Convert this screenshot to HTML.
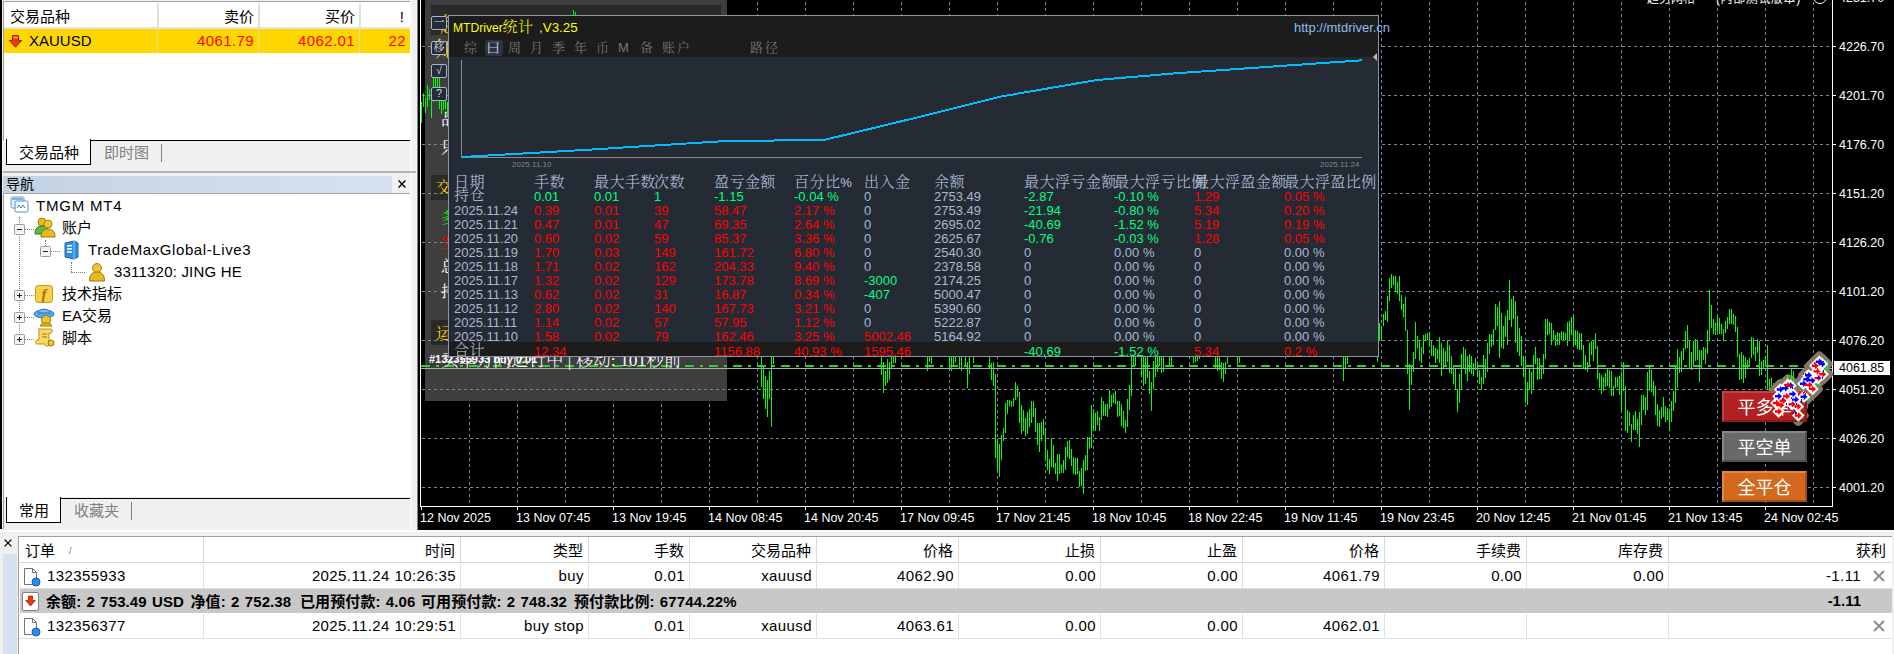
<!DOCTYPE html><html lang="zh-CN"><head><meta charset="utf-8"><title>MT4</title><style>
*{box-sizing:border-box;margin:0;padding:0}
html,body{width:1894px;height:654px;overflow:hidden;background:#f0f0f0}
body{position:relative;font-family:"Liberation Sans","Noto Sans CJK SC",sans-serif;font-size:15px;color:#000}
.a{position:absolute;white-space:nowrap}
.ui{font-size:15px;line-height:20px}
.r{text-align:right}
.chart{position:absolute;left:418px;top:0;width:1476px;height:530px;background:#000;overflow:hidden}
.cl{position:absolute;left:-418px;top:0;width:1894px;height:530px}
.ax{font-family:"Liberation Sans",sans-serif;font-size:12.5px;line-height:14px;color:#fff}
.pt{font-family:"Liberation Sans","Noto Serif CJK SC",serif;font-size:13px;line-height:14px}
.ph{font-family:"Liberation Sans","Noto Serif CJK SC",serif;font-size:15px;line-height:15px;color:#b8c8e0;font-weight:300;letter-spacing:.45px}
.red{color:#f00}.grn{color:#00ff7f}.lsb{color:#a9b9d3}
.tb{font-family:"Liberation Sans","Noto Serif CJK SC",serif;font-size:13px;line-height:14px;color:#767676;font-weight:400}
.btn{position:absolute;width:85px;height:31px;color:#fff;font-size:18px;line-height:31px;text-align:center;font-family:"Liberation Sans","Noto Sans CJK SC",sans-serif}
.sb{position:absolute;left:431px;width:16px;height:14px;border:1px solid #a5b5d5;border-radius:2px;background:#262c36;color:#d0d8e8;font-size:11px;line-height:11px;text-align:center;font-family:"Liberation Sans","Noto Serif CJK SC",serif}
.gp{font-family:"Liberation Sans","Noto Serif CJK SC",serif;font-size:16px;line-height:16px;font-weight:400}
.th{position:absolute;top:537px;height:26px;background:#fff;border-right:1px solid #d9d9d9;border-bottom:1px solid #d9d9d9;font-size:15px;line-height:27px}
.td{position:absolute;height:25px;font-size:15px;line-height:24px;border-right:1px solid #e0e0e0;letter-spacing:.4px}
</style></head><body>
<!-- left panel -->
<div class="a" style="left:0;top:0;width:2px;height:529px;background:#000"></div>
<div class="a" style="left:3px;top:1px;width:409px;height:140px;background:#fff;border-left:1px solid #a0a0a0;border-top:1px solid #a0a0a0"></div>
<div class="a" style="left:4px;top:27px;width:407px;height:2px;background:#e3e3e3"></div>
<div class="a" style="left:157px;top:3px;width:2px;height:24px;background:#e0e0e0"></div>
<div class="a" style="left:258px;top:3px;width:2px;height:24px;background:#e0e0e0"></div>
<div class="a" style="left:359px;top:3px;width:2px;height:24px;background:#e0e0e0"></div>
<div class="a ui" style="left:10px;top:6.500px">交易品种</div>
<div class="a ui r" style="left:160px;top:6.500px;width:94px">卖价</div>
<div class="a ui r" style="left:260px;top:6.500px;width:95px">买价</div>
<div class="a ui r" style="left:360px;top:6.500px;width:44px">!</div>
<div class="a" style="left:4px;top:29px;width:407px;height:24px;background:#ffd700"></div>
<div class="a" style="left:157px;top:29px;width:1px;height:24px;background:#e8d9a0"></div>
<div class="a" style="left:258px;top:29px;width:1px;height:24px;background:#e8d9a0"></div>
<div class="a" style="left:359px;top:29px;width:1px;height:24px;background:#e8d9a0"></div>
<svg class="a" style="left:8px;top:34px" width="15" height="15" viewBox="0 0 15 15"><path d="M4.5 1.5h6v5h3.2L7.5 13.2 1.3 6.5h3.2z" fill="#e8380d" stroke="#a82000" stroke-width="1"/><path d="M5.5 2.5h4v2h-4z" fill="#ff9a6a"/></svg>
<div class="a ui" style="left:29px;top:31px">XAUUSD</div>
<div class="a ui r" style="left:160px;top:31px;width:94px;color:#f00;letter-spacing:.4px">4061.79</div>
<div class="a ui r" style="left:260px;top:31px;width:95px;color:#f00;letter-spacing:.4px">4062.01</div>
<div class="a ui r" style="left:360px;top:31px;width:46px;color:#f00;letter-spacing:.4px">22</div>
<div class="a" style="left:90px;top:140px;width:321px;height:1px;background:#000"></div>
<div class="a" style="left:6px;top:139px;width:85px;height:26px;background:#fff;border:1px solid #000;border-top:none"></div>
<div class="a ui" style="left:19px;top:143px">交易品种</div>
<div class="a ui" style="left:104px;top:143px;color:#808080">即时图</div>
<div class="a" style="left:161px;top:144px;width:1px;height:18px;background:#808080"></div>
<div class="a" style="left:3px;top:171px;width:413px;height:2px;background:#b4b4b4;z-index:2"></div>
<div class="a" style="left:3px;top:176px;width:389px;height:17px;background:linear-gradient(90deg,#c3d2e3,#d6e2f0)"></div>
<div class="a ui" style="left:6px;top:174px;font-size:14px">导航</div>
<svg class="a" style="left:398px;top:180px" width="8" height="8" viewBox="0 0 8 8"><path d="M.6.6l6.800 6.800M7.400.6L.6 7.400" stroke="#000" stroke-width="1.400"/></svg>
<div class="a" style="left:3px;top:193px;width:409px;height:336px;background:#fff;border-left:1px solid #a0a0a0;border-top:1px solid #a8a8a8"></div>
<div class="a" style="left:19px;top:217px;width:0;height:122px;border-left:1px dotted #808080"></div>
<div class="a" style="left:45px;top:240px;width:0;height:10px;border-left:1px dotted #808080"></div>
<div class="a" style="left:71px;top:262px;width:0;height:10px;border-left:1px dotted #808080"></div>
<div class="a" style="left:71px;top:272px;width:14px;height:0;border-top:1px dotted #808080"></div>
<svg class="a" style="left:14px;top:224px" width="21" height="11" viewBox="0 0 21 11"><path d="M11 5.5h9" stroke="#808080" stroke-dasharray="1 1"/><rect x=".5" y=".5" width="10" height="10" rx="1" fill="#f4f4f4" stroke="#9a9a9a"/><path d="M3 5.5h5" stroke="#222"/></svg>
<svg class="a" style="left:40px;top:246px" width="21" height="11" viewBox="0 0 21 11"><path d="M11 5.5h9" stroke="#808080" stroke-dasharray="1 1"/><rect x=".5" y=".5" width="10" height="10" rx="1" fill="#f4f4f4" stroke="#9a9a9a"/><path d="M3 5.5h5" stroke="#222"/></svg>
<svg class="a" style="left:14px;top:290px" width="21" height="11" viewBox="0 0 21 11"><path d="M11 5.5h9" stroke="#808080" stroke-dasharray="1 1"/><rect x=".5" y=".5" width="10" height="10" rx="1" fill="#f4f4f4" stroke="#9a9a9a"/><path d="M3 5.5h5" stroke="#222"/><path d="M5.5 3v5" stroke="#222"/></svg>
<svg class="a" style="left:14px;top:312px" width="21" height="11" viewBox="0 0 21 11"><path d="M11 5.5h9" stroke="#808080" stroke-dasharray="1 1"/><rect x=".5" y=".5" width="10" height="10" rx="1" fill="#f4f4f4" stroke="#9a9a9a"/><path d="M3 5.5h5" stroke="#222"/><path d="M5.5 3v5" stroke="#222"/></svg>
<svg class="a" style="left:14px;top:334px" width="21" height="11" viewBox="0 0 21 11"><path d="M11 5.5h9" stroke="#808080" stroke-dasharray="1 1"/><rect x=".5" y=".5" width="10" height="10" rx="1" fill="#f4f4f4" stroke="#9a9a9a"/><path d="M3 5.5h5" stroke="#222"/><path d="M5.5 3v5" stroke="#222"/></svg>
<svg class="a" style="left:10px;top:196px" width="20" height="18" viewBox="0 0 20 18"><rect x="1" y="1" width="13" height="11" rx="1.5" fill="#e8f2fc" stroke="#5b9bd5"/><rect x="5" y="5" width="13" height="11" rx="1.5" fill="#fff" stroke="#4a8ccc"/><path d="M7 12l2-3 2 3 2-3 2 3" stroke="#3c78c8" fill="none"/><path d="M2 3h11" stroke="#7db4e8" stroke-width="2"/></svg>
<svg class="a" style="left:34px;top:217px" width="22" height="22" viewBox="0 0 22 22"><circle cx="8" cy="5" r="4" fill="#e8b820" stroke="#b08000"/><path d="M1 17c0-6 3-8 7-8s7 2 7 8z" fill="#58b848" stroke="#307820"/><circle cx="14" cy="7" r="4" fill="#f0c430" stroke="#b08000"/><path d="M7 20c0-6 3-8 7-8s7 2 7 8z" fill="#e8b820" stroke="#a07800"/></svg>
<svg class="a" style="left:62px;top:240px" width="18" height="20" viewBox="0 0 18 20"><path d="M3 3l9-2 4 2v14l-4 2-9-2z" fill="#2e8fe0" stroke="#1868b8"/><path d="M12 1v18" stroke="#8cc8f8"/><path d="M5 6l5-.5M5 9l5-.2M5 12h5" stroke="#fff" stroke-width="1.4"/></svg>
<svg class="a" style="left:88px;top:262px" width="18" height="20" viewBox="0 0 18 20"><circle cx="9" cy="6" r="4.5" fill="#f0c430" stroke="#b08000"/><path d="M1.5 19c0-7 3.5-9 7.500-9s7.500 2 7.500 9z" fill="#e8b820" stroke="#a07800"/></svg>
<svg class="a" style="left:34px;top:284px" width="20" height="20" viewBox="0 0 20 20"><rect x="1.500" y="1.500" width="17" height="17" rx="3" fill="#f8d048" stroke="#c89818"/><text x="10" y="15" font-size="14" font-style="italic" font-weight="bold" font-family="Liberation Serif,serif" text-anchor="middle" fill="#a06800">f</text></svg>
<svg class="a" style="left:33px;top:305px" width="24" height="22" viewBox="0 0 24 22"><ellipse cx="11" cy="9" rx="10" ry="4" fill="#58a8e8" stroke="#2870b8"/><path d="M5 8c0-5 12-5 12 0z" fill="#78c0f0" stroke="#2870b8"/><circle cx="13" cy="15" r="4.500" fill="#f0c430" stroke="#a07800"/><path d="M7 21c1-4 11-4 12 0z" fill="#e8b820" stroke="#a07800"/></svg>
<svg class="a" style="left:34px;top:327px" width="22" height="22" viewBox="0 0 22 22"><path d="M4 2h13c2 0 2 4 0 4h-2v11c0 3-4 3-4 0H3c-2 0-2-4 0-4h2V4c0-1-1-2-1-2z" fill="#f8d860" stroke="#c09010"/><path d="M8 7h5M8 10h5" stroke="#a07800"/><circle cx="17" cy="16" r="3" fill="#f0c430" stroke="#a07800"/></svg>
<div class="a ui" style="left:36px;top:196px;letter-spacing:0.8px">TMGM MT4</div>
<div class="a ui" style="left:62px;top:218px;letter-spacing:0px">账户</div>
<div class="a ui" style="left:88px;top:240px;letter-spacing:0.6px">TradeMaxGlobal-Live3</div>
<div class="a ui" style="left:114px;top:262px;letter-spacing:0.2px">3311320: JING HE</div>
<div class="a ui" style="left:62px;top:284px;letter-spacing:0px">技术指标</div>
<div class="a ui" style="left:62px;top:306px;letter-spacing:0px">EA交易</div>
<div class="a ui" style="left:62px;top:328px;letter-spacing:0px">脚本</div>
<div class="a" style="left:4px;top:497px;width:408px;height:32px;background:#f0f0f0"></div>
<div class="a" style="left:60px;top:498px;width:351px;height:1px;background:#000"></div>
<div class="a" style="left:6px;top:497px;width:55px;height:26px;background:#fff;border:1px solid #000;border-top:none"></div>
<div class="a ui" style="left:19px;top:501px">常用</div>
<div class="a ui" style="left:74px;top:501px;color:#808080">收藏夹</div>
<div class="a" style="left:131px;top:502px;width:1px;height:18px;background:#808080"></div>
<div class="a" style="left:410px;top:0;width:2px;height:529px;background:#f8f8f8"></div>
<div class="a" style="left:412px;top:0;width:5px;height:530px;background:#f0f0f0"></div>
<div class="a" style="left:417px;top:0;width:1px;height:530px;background:#828282"></div>
<div class="a" style="left:3px;top:141px;width:409px;height:30px;background:#f0f0f0;z-index:-1"></div>
<!-- chart -->
<div class="chart"><div class="cl">
<svg class="a" style="left:0;top:0" width="1894" height="530" viewBox="0 0 1894 530" shape-rendering="crispEdges"><g stroke="#778899" stroke-width="1" stroke-dasharray="3 3" fill="none">
<path d="M469.5 2V506"/>
<path d="M517.5 2V506"/>
<path d="M565.5 2V506"/>
<path d="M613.5 2V506"/>
<path d="M661.5 2V506"/>
<path d="M709.5 2V506"/>
<path d="M757.5 2V506"/>
<path d="M805.5 2V506"/>
<path d="M853.5 2V506"/>
<path d="M901.5 2V506"/>
<path d="M949.5 2V506"/>
<path d="M997.5 2V506"/>
<path d="M1045.5 2V506"/>
<path d="M1093.5 2V506"/>
<path d="M1141.5 2V506"/>
<path d="M1189.5 2V506"/>
<path d="M1237.5 2V506"/>
<path d="M1285.5 2V506"/>
<path d="M1333.5 2V506"/>
<path d="M1381.5 2V506"/>
<path d="M1429.5 2V506"/>
<path d="M1477.5 2V506"/>
<path d="M1525.5 2V506"/>
<path d="M1573.5 2V506"/>
<path d="M1621.5 2V506"/>
<path d="M1669.5 2V506"/>
<path d="M1717.5 2V506"/>
<path d="M1765.5 2V506"/>
<path d="M1813.5 2V506"/>
</g></svg>
<div class="a" style="left:425px;top:0;width:302px;height:401px;background:#3e3e3e"></div>
<div class="a" style="left:431px;top:5px;width:290px;height:30px;background:#2a2a2a"></div>
<div class="a" style="left:431px;top:175px;width:290px;height:25px;background:#2a2a2a"></div>
<div class="a" style="left:431px;top:320px;width:290px;height:25px;background:#2a2a2a"></div>
<div class="a gp" style="left:440px;top:14px;width:9px;overflow:hidden;color:#ffc800;font-size:21px;line-height:22px">趋势网格交易系统</div>
<div class="a gp" style="left:435px;top:38px;color:#ffc800;font-size:21px;line-height:22px">知行合一 稳健盈利</div>
<div class="a gp" style="left:441px;top:112px;color:#fff">品种: XAUUSD</div>
<div class="a gp" style="left:441px;top:140px;color:#fff">只做多单模式</div>
<div class="a gp" style="left:436px;top:180px;color:#ffd700">交易统计信息</div>
<div class="a gp" style="left:441px;top:210px;color:#0f0">多单: 1 手数 0.01</div>
<div class="a gp" style="left:441px;top:235px;color:#f00">空单: 0 手数 0.00</div>
<div class="a gp" style="left:441px;top:259px;color:#fff">总盈亏: -1.11</div>
<div class="a gp" style="left:441px;top:284px;color:#fff">持仓数: 1</div>
<div class="a gp" style="left:436px;top:326px;color:#ffd700">运行状态信息</div>
<svg class="a" style="left:0;top:0" width="1894" height="530" viewBox="0 0 1894 530" shape-rendering="crispEdges">
<g stroke="#778899" stroke-width="1" stroke-dasharray="3 3" fill="none">
<path d="M422 46.5H1832"/>
<path d="M422 95.5H1832"/>
<path d="M422 144.5H1832"/>
<path d="M422 193.5H1832"/>
<path d="M422 242.5H1832"/>
<path d="M422 291.5H1832"/>
<path d="M422 340.5H1832"/>
<path d="M422 389.5H1832"/>
<path d="M422 438.5H1832"/>
<path d="M422 487.5H1832"/>
</g>
<path d="M421.5 102V123M423.5 93V107M425.5 98V113M427.5 85V107M429.5 89V100M431.5 99V118M433.5 78V102M435.5 78V94M437.5 78V94M439.5 78V109M441.5 94V114M443.5 94V110M445.5 94V109M447.5 102V116M573.5 10V15M575.5 12V15M761.5 346V387M763.5 366V399M765.5 376V409M767.5 380V417M769.5 371V399M771.5 346V427M773.5 346V364M881.5 346V375M883.5 362V393M885.5 371V386M887.5 359V383M889.5 362V380M891.5 346V368M893.5 346V363M895.5 346V363M927.5 346V371M929.5 346V362M931.5 346V364M947.5 346V357M949.5 346V371M951.5 346V371M953.5 346V366M955.5 346V362M959.5 346V369M961.5 346V371M965.5 346V366M967.5 362V388M969.5 346V374M973.5 346V363M985.5 346V357M987.5 346V357M989.5 346V368M991.5 363V380M993.5 362V386M995.5 374V458M997.5 439V470M999.5 444V477M1001.5 435V460M1003.5 428V441M1005.5 403V433M1007.5 400V414M1009.5 400V406M1011.5 401V407M1013.5 398V406M1015.5 382V400M1017.5 386V397M1019.5 392V423M1021.5 405V434M1023.5 410V431M1025.5 418V436M1027.5 412V434M1029.5 409V427M1031.5 401V423M1033.5 401V417M1035.5 408V432M1037.5 423V445M1039.5 423V452M1041.5 422V441M1043.5 419V435M1045.5 428V460M1047.5 450V470M1049.5 459V474M1051.5 438V467M1053.5 445V468M1055.5 463V474M1057.5 454V481M1059.5 454V474M1061.5 465V473M1063.5 460V473M1065.5 447V470M1067.5 441V457M1069.5 440V459M1071.5 449V466M1073.5 457V474M1075.5 458V475M1077.5 458V474M1079.5 471V487M1081.5 468V486M1083.5 460V494M1085.5 455V471M1087.5 437V470M1089.5 437V449M1091.5 405V448M1093.5 409V431M1095.5 413V431M1097.5 411V425M1099.5 417V431M1101.5 397V420M1103.5 401V416M1105.5 404V416M1107.5 404V417M1109.5 390V409M1111.5 395V407M1113.5 393V403M1115.5 391V404M1117.5 401V417M1119.5 401V416M1121.5 404V426M1123.5 411V428M1125.5 420V433M1127.5 399V427M1129.5 385V410M1131.5 338V396M1133.5 338V366M1135.5 338V366M1141.5 338V375M1143.5 338V386M1145.5 338V384M1147.5 338V378M1149.5 371V394M1151.5 382V411M1153.5 361V389M1155.5 357V377M1157.5 338V372M1159.5 338V366M1161.5 338V373M1163.5 338V372M1169.5 338V366M1171.5 338V366M1189.5 338V358M1193.5 338V363M1195.5 338V362M1197.5 338V361M1199.5 338V359M1215.5 340V368M1217.5 340V371M1219.5 340V370M1221.5 362V379M1223.5 363V382M1225.5 362V374M1227.5 340V364M1237.5 340V363M1239.5 340V363M1343.5 340V381M1345.5 340V368M1347.5 340V364M1377.5 340V362M1379.5 323V341M1381.5 326V340M1383.5 314V326M1385.5 311V320M1387.5 296V322M1389.5 278V301M1391.5 274V288M1393.5 276V285M1395.5 276V292M1397.5 282V294M1399.5 276V301M1401.5 295V310M1403.5 304V317M1405.5 297V331M1407.5 330V374M1409.5 364V410M1411.5 365V385M1413.5 352V372M1415.5 322V359M1417.5 336V348M1419.5 340V361M1421.5 347V363M1423.5 335V354M1425.5 334V341M1427.5 333V340M1429.5 332V346M1431.5 341V356M1433.5 345V356M1435.5 348V363M1437.5 349V359M1439.5 337V363M1441.5 343V376M1443.5 348V369M1445.5 351V365M1447.5 340V362M1449.5 345V373M1451.5 356V374M1453.5 365V384M1455.5 368V390M1457.5 389V412M1459.5 374V403M1461.5 354V389M1463.5 347V369M1465.5 349V374M1467.5 356V381M1469.5 354V372M1471.5 356V374M1473.5 363V376M1475.5 358V370M1477.5 362V377M1479.5 370V384M1481.5 377V390M1483.5 355V384M1485.5 359V378M1487.5 343V372M1489.5 334V354M1491.5 334V347M1493.5 329V345M1495.5 304V330M1497.5 307V326M1499.5 301V358M1501.5 313V348M1503.5 326V349M1505.5 316V337M1507.5 310V345M1509.5 280V320M1511.5 299V327M1513.5 296V319M1515.5 301V343M1517.5 316V352M1519.5 328V356M1521.5 336V366M1523.5 356V377M1525.5 356V403M1527.5 382V405M1529.5 369V390M1531.5 372V394M1533.5 355V389M1535.5 347V364M1537.5 358V380M1539.5 358V379M1541.5 365V379M1543.5 354V374M1545.5 319V359M1547.5 319V335M1549.5 322V334M1551.5 323V345M1553.5 330V340M1555.5 335V346M1557.5 332V345M1559.5 333V345M1561.5 331V340M1563.5 332V340M1565.5 333V340M1567.5 322V346M1569.5 321V340M1571.5 317V335M1573.5 315V346M1575.5 330V345M1577.5 331V349M1579.5 333V350M1581.5 333V350M1583.5 345V368M1585.5 355V370M1587.5 362V372M1589.5 343V365M1591.5 341V355M1593.5 340V361M1595.5 333V349M1597.5 346V379M1599.5 373V388M1601.5 375V394M1603.5 377V391M1605.5 373V387M1607.5 368V386M1609.5 370V388M1611.5 371V396M1613.5 386V396M1615.5 377V388M1617.5 377V387M1619.5 376V395M1621.5 372V412M1623.5 362V391M1625.5 386V431M1627.5 410V433M1629.5 412V426M1631.5 424V442M1633.5 415V430M1635.5 411V430M1637.5 419V434M1639.5 412V447M1641.5 395V425M1643.5 395V410M1645.5 397V415M1647.5 372V410M1649.5 366V391M1651.5 370V392M1653.5 381V396M1655.5 386V415M1657.5 404V426M1659.5 410V427M1661.5 407V419M1663.5 397V417M1665.5 406V422M1667.5 408V420M1669.5 409V431M1671.5 401V422M1673.5 391V411M1675.5 366V403M1677.5 349V388M1679.5 357V373M1681.5 351V372M1683.5 348V360M1685.5 331V349M1687.5 325V348M1689.5 340V368M1691.5 352V370M1693.5 341V367M1695.5 339V361M1697.5 340V360M1699.5 350V382M1701.5 350V368M1703.5 347V360M1705.5 348V364M1707.5 330V354M1709.5 290V341M1711.5 305V328M1713.5 319V334M1715.5 323V335M1717.5 315V332M1719.5 318V334M1721.5 324V334M1723.5 329V341M1725.5 321V333M1727.5 317V329M1729.5 309V324M1731.5 309V324M1733.5 314V325M1735.5 316V332M1737.5 327V357M1739.5 354V380M1741.5 352V379M1743.5 355V383M1745.5 357V378M1747.5 360V368M1749.5 358V367M1751.5 337V358M1753.5 338V355M1755.5 347V361M1757.5 339V353M1759.5 341V376M1761.5 361V375M1763.5 360V369M1765.5 356V367M1767.5 345V389M1769.5 379V391M1771.5 378V391M1773.5 383V391M1787.5 375V383M1789.5 379V383M1791.5 369V383M1793.5 371V386M1795.5 383V390M1807.5 393V401M1809.5 393V401M1815.5 381V386M1817.5 381V387M1819.5 381V387M1825.5 360V372M1827.5 360V372" stroke="#0f0" stroke-width="1" fill="none"/>
<path d="M421 366H1832" stroke="#32cd32" stroke-width="2" stroke-dasharray="9 6 3 6" fill="none"/>
<path d="M421 368.5H1832" stroke="#a4adbd" stroke-width="1" fill="none"/>
<path d="M420.5 0V506.5H1832.5V0" stroke="#fff" stroke-width="1" fill="none"/>
<path d="M421.5 506v4M517.5 506v4M613.5 506v4M709.5 506v4M805.5 506v4M901.5 506v4M997.5 506v4M1093.5 506v4M1189.5 506v4M1285.5 506v4M1381.5 506v4M1477.5 506v4M1573.5 506v4M1669.5 506v4M1765.5 506v4" stroke="#fff" stroke-width="1" fill="none"/>
<path d="M1833 46.5h3M1833 95.5h3M1833 144.5h3M1833 193.5h3M1833 242.5h3M1833 291.5h3M1833 340.5h3M1833 389.5h3M1833 438.5h3M1833 487.5h3" stroke="#fff" stroke-width="1" fill="none"/>
</svg>
<div class="a ax" style="left:420px;top:511px">12 Nov 2025</div>
<div class="a ax" style="left:516px;top:511px">13 Nov 07:45</div>
<div class="a ax" style="left:612px;top:511px">13 Nov 19:45</div>
<div class="a ax" style="left:708px;top:511px">14 Nov 08:45</div>
<div class="a ax" style="left:804px;top:511px">14 Nov 20:45</div>
<div class="a ax" style="left:900px;top:511px">17 Nov 09:45</div>
<div class="a ax" style="left:996px;top:511px">17 Nov 21:45</div>
<div class="a ax" style="left:1092px;top:511px">18 Nov 10:45</div>
<div class="a ax" style="left:1188px;top:511px">18 Nov 22:45</div>
<div class="a ax" style="left:1284px;top:511px">19 Nov 11:45</div>
<div class="a ax" style="left:1380px;top:511px">19 Nov 23:45</div>
<div class="a ax" style="left:1476px;top:511px">20 Nov 12:45</div>
<div class="a ax" style="left:1572px;top:511px">21 Nov 01:45</div>
<div class="a ax" style="left:1668px;top:511px">21 Nov 13:45</div>
<div class="a ax" style="left:1764px;top:511px">24 Nov 02:45</div>
<div class="a ax" style="left:1839px;top:-9.5px">4251.70</div>
<div class="a ax" style="left:1839px;top:39.5px">4226.70</div>
<div class="a ax" style="left:1839px;top:88.5px">4201.70</div>
<div class="a ax" style="left:1839px;top:137.5px">4176.70</div>
<div class="a ax" style="left:1839px;top:186.5px">4151.20</div>
<div class="a ax" style="left:1839px;top:235.5px">4126.20</div>
<div class="a ax" style="left:1839px;top:284.5px">4101.20</div>
<div class="a ax" style="left:1839px;top:333.5px">4076.20</div>
<div class="a ax" style="left:1839px;top:382.5px">4051.20</div>
<div class="a ax" style="left:1839px;top:431.5px">4026.20</div>
<div class="a ax" style="left:1839px;top:480.5px">4001.20</div>
<div class="a ax" style="left:1834px;top:361px;width:56px;height:14px;background:#fff;color:#000;padding-left:5px;line-height:14px">4061.85</div>
<div class="a" style="left:1647px;top:-8px;color:#fff;font-size:12px;line-height:14px">趋势网格</div>
<div class="a" style="left:1716px;top:-8px;color:#fff;font-size:12px;line-height:14px;letter-spacing:.6px">(内部测试版本)</div>
<div class="a" style="left:1813px;top:-10px;width:14px;height:14px;border:1.5px solid #fff;border-radius:50%"></div>
<div class="a" style="left:429px;top:353px;color:#fff;font-size:11px;font-weight:bold;line-height:12px;font-family:'Liberation Sans',sans-serif">#132355933 buy 0.01</div>
<div class="a" style="left:441px;top:351px;color:#fff;font-size:17.500px;line-height:18px;font-family:'Liberation Serif','Noto Serif CJK SC',serif;font-weight:300">买单方向运行中 | 移动: 101秒前</div>
<svg class="a" style="left:1760px;top:340px" width="80" height="90" viewBox="1760 340 80 90"><path d="M1815.8 364.0L1822.1 357.7L1828.4 364.0L1822.1 370.3zM1802.2 375.3L1808.5 369.0L1814.8 375.3L1808.5 381.6zM1805.6 380.4L1811.9 374.1L1818.2 380.4L1811.9 386.7zM1784.1 385.5L1790.4 379.2L1796.7 385.5L1790.4 391.8zM1773.9 389.5L1780.2 383.2L1786.5 389.5L1780.2 395.8zM1786.4 394.0L1792.7 387.7L1799.0 394.0L1792.7 400.3zM1797.7 396.8L1804.0 390.5L1810.3 396.8L1804.0 403.1zM1797.1 383.8L1803.4 377.5L1809.7 383.8L1803.4 390.1zM1779.0 388.3L1785.3 382.0L1791.6 388.3L1785.3 394.6zM1813.0 361.7L1819.3 355.4L1825.6 361.7L1819.3 368.0zM1789.2 399.6L1795.5 393.3L1801.8 399.6L1795.5 405.9zM1800.5 379.3L1806.8 373.0L1813.1 379.3L1806.8 385.6zM1772.2 396.2L1778.5 389.9L1784.8 396.2L1778.5 402.5zM1816.4 374.2L1822.7 367.9L1829.0 374.2L1822.7 380.5zM1811.8 378.1L1818.1 371.8L1824.4 378.1L1818.1 384.4zM1806.2 388.9L1812.5 382.6L1818.8 388.9L1812.5 395.2zM1780.2 396.2L1786.5 389.9L1792.8 396.2L1786.5 402.5zM1774.5 405.3L1780.8 399.0L1787.1 405.3L1780.8 411.6zM1791.5 406.4L1797.8 400.1L1804.1 406.4L1797.8 412.7zM1772.2 411.5L1778.5 405.2L1784.8 411.5L1778.5 417.8zM1792.0 415.5L1798.3 409.2L1804.6 415.5L1798.3 421.8zM1809.0 365.7L1815.3 359.4L1821.6 365.7L1815.3 372.0zM1776.8 400.8L1783.1 394.5L1789.4 400.8L1783.1 407.1zM1785.8 404.2L1792.1 397.9L1798.4 404.2L1792.1 410.5zM1802.8 384.9L1809.1 378.6L1815.4 384.9L1809.1 391.2zM1810.7 371.4L1817.0 365.1L1823.3 371.4L1817.0 377.7zM1770.0 403.0L1776.3 396.7L1782.6 403.0L1776.3 409.3zM1781.3 384.9L1787.6 378.6L1793.9 384.9L1787.6 391.2z" fill="#857666" stroke="#857666" stroke-width="8" stroke-linejoin="round"/></svg>
<div class="btn" style="left:1722px;top:391px;background:#b22222;border:2px solid #8a1a1a;border-top-color:#c84040;border-left-color:#c84040">平多单</div>
<div class="btn" style="left:1722px;top:431px;background:#696969;border:2px solid #505050;border-top-color:#888;border-left-color:#888">平空单</div>
<div class="btn" style="left:1722px;top:471px;background:#d2691e;border:2px solid #a85010;border-top-color:#e88838;border-left-color:#e88838">全平仓</div>
<svg class="a" style="left:1760px;top:340px" width="80" height="90" viewBox="1760 340 80 90"><path d="M1778 392L1830 360M1776 400L1812 372M1790 410L1828 372" stroke="#7089a8" stroke-width="1" fill="none" opacity=".7"/><path d="M1787.5 375V383M1791.5 369V383M1793.5 371V386M1807.5 393V401M1809.5 393V401M1817.5 381V386M1819.5 381V386M1825.5 360V372M1827.5 360V372" stroke="#0f0" stroke-width="1" fill="none" shape-rendering="crispEdges"/><path d="M1815.8 364.0L1822.1 357.7L1828.4 364.0L1822.1 370.3zM1802.2 375.3L1808.5 369.0L1814.8 375.3L1808.5 381.6zM1805.6 380.4L1811.9 374.1L1818.2 380.4L1811.9 386.7zM1784.1 385.5L1790.4 379.2L1796.7 385.5L1790.4 391.8zM1773.9 389.5L1780.2 383.2L1786.5 389.5L1780.2 395.8zM1786.4 394.0L1792.7 387.7L1799.0 394.0L1792.7 400.3zM1797.7 396.8L1804.0 390.5L1810.3 396.8L1804.0 403.1zM1797.1 383.8L1803.4 377.5L1809.7 383.8L1803.4 390.1zM1779.0 388.3L1785.3 382.0L1791.6 388.3L1785.3 394.6zM1813.0 361.7L1819.3 355.4L1825.6 361.7L1819.3 368.0zM1789.2 399.6L1795.5 393.3L1801.8 399.6L1795.5 405.9zM1800.5 379.3L1806.8 373.0L1813.1 379.3L1806.8 385.6zM1772.2 396.2L1778.5 389.9L1784.8 396.2L1778.5 402.5zM1816.4 374.2L1822.7 367.9L1829.0 374.2L1822.7 380.5zM1811.8 378.1L1818.1 371.8L1824.4 378.1L1818.1 384.4zM1806.2 388.9L1812.5 382.6L1818.8 388.9L1812.5 395.2zM1780.2 396.2L1786.5 389.9L1792.8 396.2L1786.5 402.5zM1774.5 405.3L1780.8 399.0L1787.1 405.3L1780.8 411.6zM1791.5 406.4L1797.8 400.1L1804.1 406.4L1797.8 412.7zM1772.2 411.5L1778.5 405.2L1784.8 411.5L1778.5 417.8zM1792.0 415.5L1798.3 409.2L1804.6 415.5L1798.3 421.8zM1809.0 365.7L1815.3 359.4L1821.6 365.7L1815.3 372.0zM1776.8 400.8L1783.1 394.5L1789.4 400.8L1783.1 407.1zM1785.8 404.2L1792.1 397.9L1798.4 404.2L1792.1 410.5zM1802.8 384.9L1809.1 378.6L1815.4 384.9L1809.1 391.2zM1810.7 371.4L1817.0 365.1L1823.3 371.4L1817.0 377.7zM1770.0 403.0L1776.3 396.7L1782.6 403.0L1776.3 409.3zM1781.3 384.9L1787.6 378.6L1793.9 384.9L1787.6 391.2z" fill="#fff"/><path d="M1818.6 362.8h3.2v-2.3l3.8 3.5l-3.8 3.5v-2.3h-3.2zM1805.0 374.1h3.2v-2.3l3.8 3.5l-3.8 3.5v-2.3h-3.2zM1808.4 379.2h3.2v-2.3l3.8 3.5l-3.8 3.5v-2.3h-3.2zM1786.9 384.3h3.2v-2.3l3.8 3.5l-3.8 3.5v-2.3h-3.2zM1776.7 388.3h3.2v-2.3l3.8 3.5l-3.8 3.5v-2.3h-3.2zM1789.2 392.8h3.2v-2.3l3.8 3.5l-3.8 3.5v-2.3h-3.2zM1800.5 395.6h3.2v-2.3l3.8 3.5l-3.8 3.5v-2.3h-3.2zM1799.9 382.6h3.2v-2.3l3.8 3.5l-3.8 3.5v-2.3h-3.2zM1781.8 387.1h3.2v-2.3l3.8 3.5l-3.8 3.5v-2.3h-3.2zM1815.8 360.5h3.2v-2.3l3.8 3.5l-3.8 3.5v-2.3h-3.2zM1792.0 398.4h3.2v-2.3l3.8 3.5l-3.8 3.5v-2.3h-3.2zM1803.3 378.1h3.2v-2.3l3.8 3.5l-3.8 3.5v-2.3h-3.2zM1775.0 395.0h3.2v-2.3l3.8 3.5l-3.8 3.5v-2.3h-3.2z" fill="#0000ff"/><path d="M1819.2 373.0h3.2v-2.3l3.8 3.5l-3.8 3.5v-2.3h-3.2zM1814.6 376.9h3.2v-2.3l3.8 3.5l-3.8 3.5v-2.3h-3.2zM1809.0 387.7h3.2v-2.3l3.8 3.5l-3.8 3.5v-2.3h-3.2zM1783.0 395.0h3.2v-2.3l3.8 3.5l-3.8 3.5v-2.3h-3.2zM1777.3 404.1h3.2v-2.3l3.8 3.5l-3.8 3.5v-2.3h-3.2zM1794.3 405.2h3.2v-2.3l3.8 3.5l-3.8 3.5v-2.3h-3.2zM1775.0 410.3h3.2v-2.3l3.8 3.5l-3.8 3.5v-2.3h-3.2zM1794.8 414.3h3.2v-2.3l3.8 3.5l-3.8 3.5v-2.3h-3.2zM1811.8 364.5h3.2v-2.3l3.8 3.5l-3.8 3.5v-2.3h-3.2zM1779.6 399.6h3.2v-2.3l3.8 3.5l-3.8 3.5v-2.3h-3.2zM1788.6 403.0h3.2v-2.3l3.8 3.5l-3.8 3.5v-2.3h-3.2zM1805.6 383.7h3.2v-2.3l3.8 3.5l-3.8 3.5v-2.3h-3.2zM1813.5 370.2h3.2v-2.3l3.8 3.5l-3.8 3.5v-2.3h-3.2zM1772.8 401.8h3.2v-2.3l3.8 3.5l-3.8 3.5v-2.3h-3.2zM1784.1 383.7h3.2v-2.3l3.8 3.5l-3.8 3.5v-2.3h-3.2z" fill="#ff0000"/><path d="M1809 373h1v2h-1zM1801 400h1v2h-1zM1793 412h1v2h-1zM1796 403h1v2h-1zM1795 412h1v2h-1zM1818 376h1v2h-1zM1801 399h1v2h-1zM1786 403h1v2h-1zM1822 377h1v2h-1zM1823 370h1v2h-1zM1805 373h1v2h-1zM1818 362h1v2h-1zM1792 387h1v2h-1zM1819 377h1v2h-1zM1782 398h1v2h-1zM1817 377h1v2h-1zM1793 403h1v2h-1zM1788 407h1v2h-1zM1791 386h1v2h-1zM1809 373h1v2h-1z" fill="#0000ff"/><path d="M1791 397h1v2h-1zM1798 393h1v2h-1zM1818 371h1v2h-1zM1795 406h1v2h-1zM1778 411h1v2h-1zM1813 381h1v2h-1zM1814 362h1v2h-1zM1805 384h1v2h-1zM1812 388h1v2h-1zM1803 392h1v2h-1zM1804 391h1v2h-1zM1823 361h1v2h-1zM1796 412h1v2h-1zM1805 393h1v2h-1zM1779 403h1v2h-1zM1803 373h1v2h-1zM1817 368h1v2h-1zM1809 394h1v2h-1zM1785 415h1v2h-1zM1791 386h1v2h-1z" fill="#ff0000"/></svg>
<div class="sb" style="top:16px">一</div>
<div class="sb" style="top:41px">移</div>
<div class="sb" style="top:64px">√</div>
<div class="sb" style="top:87px">?</div>
<!-- MTDriver panel -->
<div class="a" style="left:448px;top:15px;width:931px;height:342px;background:#252b35;border:1px solid #8896ae;overflow:hidden"><div class="a" style="left:-449px;top:-16px;width:1894px;height:654px">
<div class="a" style="left:449px;top:16px;width:930px;height:41px;background:#1c1c1c"></div>
<div class="a" style="left:449px;top:342px;width:930px;height:14px;background:#1c1c1c"></div>
<div class="a" style="left:453px;top:19px;color:#ff0;font-size:13px;line-height:16px;font-family:'Liberation Sans','Noto Serif CJK SC',serif"><span style="display:inline-block;transform:scaleX(.93);transform-origin:0 50%;margin-right:-4px">MTDriver</span><span style="font-size:15px;font-weight:300;letter-spacing:.5px">统计</span><span style="display:inline-block;transform:scaleX(1.03);transform-origin:0 50%;margin-left:5.500px"> ,V3.25</span></div>
<div class="a" style="left:485px;top:40px;width:18px;height:16px;background:#2b3442;border-radius:3px"></div>
<div class="a tb" style="left:464px;top:41px;color:#767676;">综</div>
<div class="a tb" style="left:487px;top:41px;color:#b9c6dc;transform:scaleX(1.25);transform-origin:0 50%;left:484.500px;">日</div>
<div class="a tb" style="left:508px;top:41px;color:#767676;">周</div>
<div class="a tb" style="left:530px;top:41px;color:#767676;">月</div>
<div class="a tb" style="left:552px;top:41px;color:#767676;">季</div>
<div class="a tb" style="left:574px;top:41px;color:#767676;">年</div>
<div class="a tb" style="left:596px;top:41px;color:#767676;">币</div>
<div class="a tb" style="left:618px;top:41px;color:#767676;">M</div>
<div class="a tb" style="left:640px;top:41px;color:#767676;">备</div>
<div class="a tb" style="left:662px;top:41px;color:#767676;letter-spacing:2px;">账户</div>
<div class="a tb" style="left:750px;top:41px;color:#767676;letter-spacing:2px;">路径</div>
<svg class="a" style="left:0;top:0" width="1894" height="400" viewBox="0 0 1894 400"><path d="M461.5 60V157.5H1362" stroke="#8c8c8c" fill="none" shape-rendering="crispEdges"/><path d="M462 157L592 149.500L726 141L824 140L920 116.800L1001 96.500L1097 80L1173 73.500L1362 60.300" stroke="#00bfff" stroke-width="2" fill="none" shape-rendering="crispEdges"/><path d="M1373 57l4-4v8z" fill="#b8b8b8"/></svg>
<div class="a" style="left:512px;top:160px;color:#808890;font-size:8px;line-height:10px;font-family:'Liberation Sans',sans-serif">2025.11.10</div>
<div class="a" style="left:1320px;top:160px;color:#808890;font-size:8px;line-height:10px;font-family:'Liberation Sans',sans-serif">2025.11.24</div>
<div class="a ph" style="left:454px;top:173.500px">日期</div>
<div class="a ph" style="left:534px;top:173.500px">手数</div>
<div class="a ph" style="left:594px;top:173.500px">最大手数</div>
<div class="a ph" style="left:654px;top:173.500px">次数</div>
<div class="a ph" style="left:714px;top:173.500px">盈亏金额</div>
<div class="a ph" style="left:794px;top:173.500px">百分比<span style="font-size:13px;letter-spacing:0">%</span></div>
<div class="a ph" style="left:864px;top:173.500px">出入金</div>
<div class="a ph" style="left:934px;top:173.500px">余额</div>
<div class="a ph" style="left:1024px;top:173.500px">最大浮亏金额</div>
<div class="a ph" style="left:1114px;top:173.500px">最大浮亏比例</div>
<div class="a ph" style="left:1194px;top:173.500px">最大浮盈金额</div>
<div class="a ph" style="left:1284px;top:173.500px">最大浮盈比例</div>
<div class="a ph" style="left:454px;top:187px">持仓</div>
<div class="a pt grn" style="left:534px;top:190px">0.01</div>
<div class="a pt grn" style="left:594px;top:190px">0.01</div>
<div class="a pt grn" style="left:654px;top:190px">1</div>
<div class="a pt grn" style="left:714px;top:190px">-1.15</div>
<div class="a pt grn" style="left:794px;top:190px">-0.04 %</div>
<div class="a pt lsb" style="left:864px;top:190px">0</div>
<div class="a pt lsb" style="left:934px;top:190px">2753.49</div>
<div class="a pt grn" style="left:1024px;top:190px">-2.87</div>
<div class="a pt grn" style="left:1114px;top:190px">-0.10 %</div>
<div class="a pt red" style="left:1194px;top:190px">1.29</div>
<div class="a pt red" style="left:1284px;top:190px">0.05 %</div>
<div class="a pt lsb" style="left:454px;top:204px">2025.11.24</div>
<div class="a pt red" style="left:534px;top:204px">0.39</div>
<div class="a pt red" style="left:594px;top:204px">0.01</div>
<div class="a pt red" style="left:654px;top:204px">39</div>
<div class="a pt red" style="left:714px;top:204px">58.47</div>
<div class="a pt red" style="left:794px;top:204px">2.17 %</div>
<div class="a pt lsb" style="left:864px;top:204px">0</div>
<div class="a pt lsb" style="left:934px;top:204px">2753.49</div>
<div class="a pt grn" style="left:1024px;top:204px">-21.94</div>
<div class="a pt grn" style="left:1114px;top:204px">-0.80 %</div>
<div class="a pt red" style="left:1194px;top:204px">5.34</div>
<div class="a pt red" style="left:1284px;top:204px">0.20 %</div>
<div class="a pt lsb" style="left:454px;top:218px">2025.11.21</div>
<div class="a pt red" style="left:534px;top:218px">0.47</div>
<div class="a pt red" style="left:594px;top:218px">0.01</div>
<div class="a pt red" style="left:654px;top:218px">47</div>
<div class="a pt red" style="left:714px;top:218px">69.35</div>
<div class="a pt red" style="left:794px;top:218px">2.64 %</div>
<div class="a pt lsb" style="left:864px;top:218px">0</div>
<div class="a pt lsb" style="left:934px;top:218px">2695.02</div>
<div class="a pt grn" style="left:1024px;top:218px">-40.69</div>
<div class="a pt grn" style="left:1114px;top:218px">-1.52 %</div>
<div class="a pt red" style="left:1194px;top:218px">5.19</div>
<div class="a pt red" style="left:1284px;top:218px">0.19 %</div>
<div class="a pt lsb" style="left:454px;top:232px">2025.11.20</div>
<div class="a pt red" style="left:534px;top:232px">0.60</div>
<div class="a pt red" style="left:594px;top:232px">0.02</div>
<div class="a pt red" style="left:654px;top:232px">59</div>
<div class="a pt red" style="left:714px;top:232px">85.37</div>
<div class="a pt red" style="left:794px;top:232px">3.36 %</div>
<div class="a pt lsb" style="left:864px;top:232px">0</div>
<div class="a pt lsb" style="left:934px;top:232px">2625.67</div>
<div class="a pt grn" style="left:1024px;top:232px">-0.76</div>
<div class="a pt grn" style="left:1114px;top:232px">-0.03 %</div>
<div class="a pt red" style="left:1194px;top:232px">1.28</div>
<div class="a pt red" style="left:1284px;top:232px">0.05 %</div>
<div class="a pt lsb" style="left:454px;top:246px">2025.11.19</div>
<div class="a pt red" style="left:534px;top:246px">1.70</div>
<div class="a pt red" style="left:594px;top:246px">0.03</div>
<div class="a pt red" style="left:654px;top:246px">149</div>
<div class="a pt red" style="left:714px;top:246px">161.72</div>
<div class="a pt red" style="left:794px;top:246px">6.80 %</div>
<div class="a pt lsb" style="left:864px;top:246px">0</div>
<div class="a pt lsb" style="left:934px;top:246px">2540.30</div>
<div class="a pt lsb" style="left:1024px;top:246px">0</div>
<div class="a pt lsb" style="left:1114px;top:246px">0.00 %</div>
<div class="a pt lsb" style="left:1194px;top:246px">0</div>
<div class="a pt lsb" style="left:1284px;top:246px">0.00 %</div>
<div class="a pt lsb" style="left:454px;top:260px">2025.11.18</div>
<div class="a pt red" style="left:534px;top:260px">1.71</div>
<div class="a pt red" style="left:594px;top:260px">0.02</div>
<div class="a pt red" style="left:654px;top:260px">162</div>
<div class="a pt red" style="left:714px;top:260px">204.33</div>
<div class="a pt red" style="left:794px;top:260px">9.40 %</div>
<div class="a pt lsb" style="left:864px;top:260px">0</div>
<div class="a pt lsb" style="left:934px;top:260px">2378.58</div>
<div class="a pt lsb" style="left:1024px;top:260px">0</div>
<div class="a pt lsb" style="left:1114px;top:260px">0.00 %</div>
<div class="a pt lsb" style="left:1194px;top:260px">0</div>
<div class="a pt lsb" style="left:1284px;top:260px">0.00 %</div>
<div class="a pt lsb" style="left:454px;top:274px">2025.11.17</div>
<div class="a pt red" style="left:534px;top:274px">1.32</div>
<div class="a pt red" style="left:594px;top:274px">0.02</div>
<div class="a pt red" style="left:654px;top:274px">129</div>
<div class="a pt red" style="left:714px;top:274px">173.78</div>
<div class="a pt red" style="left:794px;top:274px">8.69 %</div>
<div class="a pt grn" style="left:864px;top:274px">-3000</div>
<div class="a pt lsb" style="left:934px;top:274px">2174.25</div>
<div class="a pt lsb" style="left:1024px;top:274px">0</div>
<div class="a pt lsb" style="left:1114px;top:274px">0.00 %</div>
<div class="a pt lsb" style="left:1194px;top:274px">0</div>
<div class="a pt lsb" style="left:1284px;top:274px">0.00 %</div>
<div class="a pt lsb" style="left:454px;top:288px">2025.11.13</div>
<div class="a pt red" style="left:534px;top:288px">0.62</div>
<div class="a pt red" style="left:594px;top:288px">0.02</div>
<div class="a pt red" style="left:654px;top:288px">31</div>
<div class="a pt red" style="left:714px;top:288px">16.87</div>
<div class="a pt red" style="left:794px;top:288px">0.34 %</div>
<div class="a pt grn" style="left:864px;top:288px">-407</div>
<div class="a pt lsb" style="left:934px;top:288px">5000.47</div>
<div class="a pt lsb" style="left:1024px;top:288px">0</div>
<div class="a pt lsb" style="left:1114px;top:288px">0.00 %</div>
<div class="a pt lsb" style="left:1194px;top:288px">0</div>
<div class="a pt lsb" style="left:1284px;top:288px">0.00 %</div>
<div class="a pt lsb" style="left:454px;top:302px">2025.11.12</div>
<div class="a pt red" style="left:534px;top:302px">2.80</div>
<div class="a pt red" style="left:594px;top:302px">0.02</div>
<div class="a pt red" style="left:654px;top:302px">140</div>
<div class="a pt red" style="left:714px;top:302px">167.73</div>
<div class="a pt red" style="left:794px;top:302px">3.21 %</div>
<div class="a pt lsb" style="left:864px;top:302px">0</div>
<div class="a pt lsb" style="left:934px;top:302px">5390.60</div>
<div class="a pt lsb" style="left:1024px;top:302px">0</div>
<div class="a pt lsb" style="left:1114px;top:302px">0.00 %</div>
<div class="a pt lsb" style="left:1194px;top:302px">0</div>
<div class="a pt lsb" style="left:1284px;top:302px">0.00 %</div>
<div class="a pt lsb" style="left:454px;top:316px">2025.11.11</div>
<div class="a pt red" style="left:534px;top:316px">1.14</div>
<div class="a pt red" style="left:594px;top:316px">0.02</div>
<div class="a pt red" style="left:654px;top:316px">57</div>
<div class="a pt red" style="left:714px;top:316px">57.95</div>
<div class="a pt red" style="left:794px;top:316px">1.12 %</div>
<div class="a pt lsb" style="left:864px;top:316px">0</div>
<div class="a pt lsb" style="left:934px;top:316px">5222.87</div>
<div class="a pt lsb" style="left:1024px;top:316px">0</div>
<div class="a pt lsb" style="left:1114px;top:316px">0.00 %</div>
<div class="a pt lsb" style="left:1194px;top:316px">0</div>
<div class="a pt lsb" style="left:1284px;top:316px">0.00 %</div>
<div class="a pt lsb" style="left:454px;top:330px">2025.11.10</div>
<div class="a pt red" style="left:534px;top:330px">1.58</div>
<div class="a pt red" style="left:594px;top:330px">0.02</div>
<div class="a pt red" style="left:654px;top:330px">79</div>
<div class="a pt red" style="left:714px;top:330px">162.46</div>
<div class="a pt red" style="left:794px;top:330px">3.25 %</div>
<div class="a pt red" style="left:864px;top:330px">5002.46</div>
<div class="a pt lsb" style="left:934px;top:330px">5164.92</div>
<div class="a pt lsb" style="left:1024px;top:330px">0</div>
<div class="a pt lsb" style="left:1114px;top:330px">0.00 %</div>
<div class="a pt lsb" style="left:1194px;top:330px">0</div>
<div class="a pt lsb" style="left:1284px;top:330px">0.00 %</div>
<div class="a ph" style="left:454px;top:342px">合计</div>
<div class="a pt red" style="left:534px;top:345px">12.34</div>
<div class="a pt red" style="left:714px;top:345px">1156.88</div>
<div class="a pt red" style="left:794px;top:345px">40.93 %</div>
<div class="a pt red" style="left:864px;top:345px">1595.46</div>
<div class="a pt grn" style="left:1024px;top:345px">-40.69</div>
<div class="a pt grn" style="left:1114px;top:345px">-1.52 %</div>
<div class="a pt red" style="left:1194px;top:345px">5.34</div>
<div class="a pt red" style="left:1284px;top:345px">0.2 %</div>
</div></div>
<div class="a" style="left:1294px;top:21px;color:#8fbcec;font-size:13px;line-height:14px;font-family:'Liberation Sans',sans-serif">http://mtdriver.cn</div>
</div></div>
<!-- terminal -->
<div class="a" style="left:0;top:530px;width:1894px;height:124px;background:#f0f0f0"></div>
<div class="a" style="left:0;top:530px;width:1894px;height:2px;background:#fcfcfc"></div>
<svg class="a" style="left:4px;top:539px" width="8" height="8" viewBox="0 0 8 8"><path d="M.6.6l6.800 6.800M7.400.6L.6 7.400" stroke="#000" stroke-width="1.300"/></svg>
<div class="a" style="left:3px;top:554px;width:14px;height:100px;background:#d5e1ef"></div>
<div class="a" style="left:18px;top:536px;width:1874px;height:118px;background:#fff;border-left:1px solid #a0a0a0;border-top:1px solid #a0a0a0"></div>
<div class="th" style="left:19px;width:185px;padding-left:6px">订单<span style="color:#707070;font-size:9px;margin-left:14px;position:relative;top:-2px">/</span></div>
<div class="th r" style="left:204px;width:257px;padding-right:5px">时间</div>
<div class="th r" style="left:461px;width:128px;padding-right:5px">类型</div>
<div class="th r" style="left:589px;width:101px;padding-right:5px">手数</div>
<div class="th r" style="left:690px;width:127px;padding-right:5px">交易品种</div>
<div class="th r" style="left:817px;width:142px;padding-right:5px">价格</div>
<div class="th r" style="left:959px;width:142px;padding-right:5px">止损</div>
<div class="th r" style="left:1101px;width:142px;padding-right:5px">止盈</div>
<div class="th r" style="left:1243px;width:142px;padding-right:5px">价格</div>
<div class="th r" style="left:1385px;width:142px;padding-right:5px">手续费</div>
<div class="th r" style="left:1527px;width:142px;padding-right:5px">库存费</div>
<div class="th r" style="left:1669px;width:223px;padding-right:6px;border-right:none">获利</div>
<div class="a" style="left:19px;top:588px;width:1873px;height:1px;background:#e0e0e0"></div>
<div class="td" style="left:19px;top:563.5px;width:185px;padding-left:28px">132355933</div>
<div class="td r" style="left:204px;top:563.5px;width:257px;padding-right:4px">2025.11.24 10:26:35</div>
<div class="td r" style="left:461px;top:563.5px;width:128px;padding-right:4px">buy</div>
<div class="td r" style="left:589px;top:563.5px;width:101px;padding-right:4px">0.01</div>
<div class="td r" style="left:690px;top:563.5px;width:127px;padding-right:4px">xauusd</div>
<div class="td r" style="left:817px;top:563.5px;width:142px;padding-right:4px">4062.90</div>
<div class="td r" style="left:959px;top:563.5px;width:142px;padding-right:4px">0.00</div>
<div class="td r" style="left:1101px;top:563.5px;width:142px;padding-right:4px">0.00</div>
<div class="td r" style="left:1243px;top:563.5px;width:142px;padding-right:4px">4061.79</div>
<div class="td r" style="left:1385px;top:563.5px;width:142px;padding-right:4px">0.00</div>
<div class="td r" style="left:1527px;top:563.5px;width:142px;padding-right:4px">0.00</div>
<div class="td r" style="left:1669px;top:563.5px;width:223px;padding-right:31px;border-right:none">-1.11</div>
<svg class="a" style="left:22px;top:567px" width="20" height="20" viewBox="0 0 20 20"><path d="M2.500 1.500h8l4 4v12h-12z" fill="#fff" stroke="#707070"/><path d="M10.500 1.500v4h4" fill="none" stroke="#707070"/><circle cx="14" cy="15" r="4" fill="#2d8ceb" stroke="#1a5fb0"/></svg>
<svg class="a" style="left:1873px;top:570px" width="12" height="12" viewBox="0 0 12 12"><path d="M1 1l10 10M11 1L1 11" stroke="#8a8a8a" stroke-width="1.800"/></svg>
<div class="a" style="left:20px;top:589px;width:1872px;height:24px;background:#c8c8c8"></div>
<svg class="a" style="left:22px;top:592px" width="18" height="19" viewBox="0 0 18 19"><rect x=".5" y=".5" width="16" height="18" rx="1.500" fill="#fff" stroke="#808080"/><path d="M6.500 4h4v4.500h2.800L8.500 14 3.700 8.500h2.800z" fill="#e8380d" stroke="#b02000" stroke-width=".8"/></svg>
<div class="a" style="left:46px;top:588.5px;font-size:15px;line-height:25px;font-weight:bold;word-spacing:1px;letter-spacing:.1px">余额: 2 753.49 USD</div>
<div class="a" style="left:190.5px;top:588.5px;font-size:15px;line-height:25px;font-weight:bold;word-spacing:1px;letter-spacing:.1px">净值: 2 752.38</div>
<div class="a" style="left:300px;top:588.5px;font-size:15px;line-height:25px;font-weight:bold;word-spacing:1px;letter-spacing:.1px">已用预付款: 4.06</div>
<div class="a" style="left:421px;top:588.5px;font-size:15px;line-height:25px;font-weight:bold;word-spacing:1px;letter-spacing:.1px">可用预付款: 2 748.32</div>
<div class="a" style="left:574px;top:588.5px;font-size:15px;line-height:25px;font-weight:bold;word-spacing:1px;letter-spacing:.1px">预付款比例: 67744.22%</div>
<div class="a r" style="left:1700px;top:588px;width:161px;font-size:15px;line-height:25px;font-weight:bold">-1.11</div>
<div class="a" style="left:19px;top:638px;width:1873px;height:1px;background:#e0e0e0"></div>
<div class="td" style="left:19px;top:613.5px;width:185px;padding-left:28px">132356377</div>
<div class="td r" style="left:204px;top:613.5px;width:257px;padding-right:4px">2025.11.24 10:29:51</div>
<div class="td r" style="left:461px;top:613.5px;width:128px;padding-right:4px">buy stop</div>
<div class="td r" style="left:589px;top:613.5px;width:101px;padding-right:4px">0.01</div>
<div class="td r" style="left:690px;top:613.5px;width:127px;padding-right:4px">xauusd</div>
<div class="td r" style="left:817px;top:613.5px;width:142px;padding-right:4px">4063.61</div>
<div class="td r" style="left:959px;top:613.5px;width:142px;padding-right:4px">0.00</div>
<div class="td r" style="left:1101px;top:613.5px;width:142px;padding-right:4px">0.00</div>
<div class="td r" style="left:1243px;top:613.5px;width:142px;padding-right:4px">4062.01</div>
<div class="td r" style="left:1385px;top:613.5px;width:142px;padding-right:4px"></div>
<div class="td r" style="left:1527px;top:613.5px;width:142px;padding-right:4px"></div>
<div class="td r" style="left:1669px;top:613.5px;width:223px;padding-right:31px;border-right:none"></div>
<svg class="a" style="left:22px;top:617px" width="20" height="20" viewBox="0 0 20 20"><path d="M2.500 1.500h8l4 4v12h-12z" fill="#fff" stroke="#707070"/><path d="M10.500 1.500v4h4" fill="none" stroke="#707070"/><circle cx="14" cy="15" r="4" fill="#2d8ceb" stroke="#1a5fb0"/></svg>
<svg class="a" style="left:1873px;top:620px" width="12" height="12" viewBox="0 0 12 12"><path d="M1 1l10 10M11 1L1 11" stroke="#8a8a8a" stroke-width="1.800"/></svg>
</body></html>
